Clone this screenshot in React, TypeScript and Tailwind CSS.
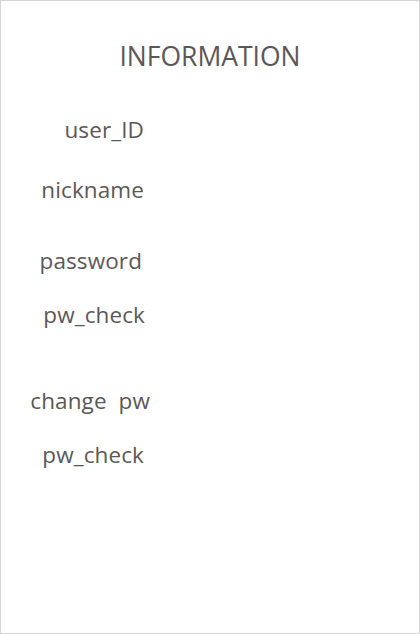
const fields = [
  { label: 'user_ID', gap: 'mt-[40px]', w: 'w-[143px]' },
  { label: 'nickname', gap: 'mt-[32px]', w: 'w-[143px]' },
  { label: 'password', gap: 'mt-[43px]', w: 'w-[141px]' },
  { label: 'pw_check', gap: 'mt-[26px]', w: 'w-[144px]' },
  { label: 'change pw', gap: 'mt-[58px]', w: 'w-[149px]' },
  { label: 'pw_check', gap: 'mt-[26px]', w: 'w-[143px]' },
];

export default function App() {
  return (
    <div className="w-[420px] h-[634px] border border-[#d4d4d4] bg-white text-[#5c5757] font-['Open_Sans',sans-serif] flex flex-col">
      <h1 className="mt-[35px] text-center text-[26.5px] leading-[40px] font-normal">INFORMATION</h1>
      <div className="flex flex-col">
        {fields.map((f, i) => (
          <div key={i} className={`${f.gap} flex`}>
            <span className={`${f.w} text-right text-[22.5px] leading-[28px] tracking-[0.1px] [word-spacing:6px]`}>
              {f.label}
            </span>
          </div>
        ))}
      </div>
    </div>
  );
}
